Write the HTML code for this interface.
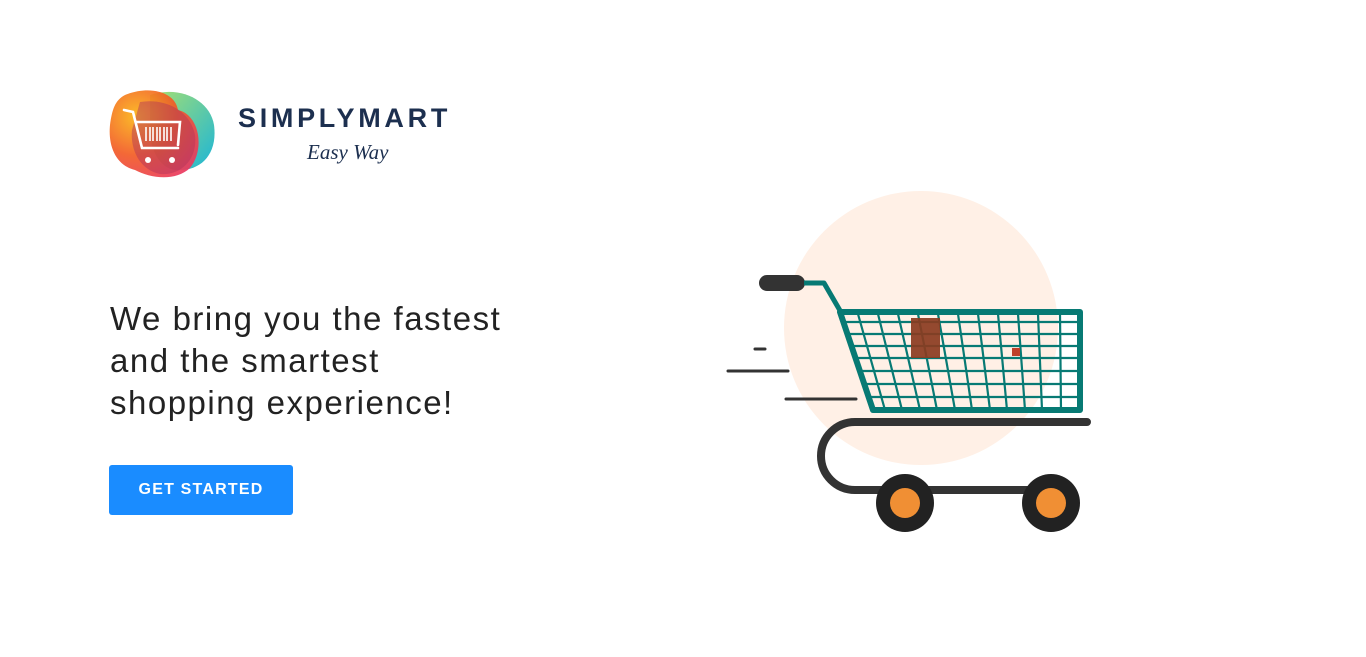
<!DOCTYPE html>
<html><head><meta charset="utf-8"><style>
html,body{margin:0;padding:0;background:#fff;width:1366px;height:657px;overflow:hidden;font-family:"Liberation Sans",sans-serif}
.h{position:absolute;left:110px;top:298px;font-size:33px;line-height:42px;color:#222;letter-spacing:1.5px;margin:0;font-weight:normal}
.btn{position:absolute;left:109px;top:465px;width:184px;height:50px;background:#1a8cff;border-radius:3px;color:#fff;font-size:16px;font-weight:bold;letter-spacing:1.2px;text-align:center;line-height:50px}
.brand{position:absolute;left:238px;top:103px;font-size:27px;font-weight:bold;letter-spacing:3.7px;color:#1c2f4f}
.easy{position:absolute;left:307px;top:140px;font-family:"Liberation Serif",serif;font-style:italic;font-size:21px;color:#1c2f4f}
</style></head><body>
<svg style="position:absolute;left:0;top:0" width="1366" height="657">
<defs>
<radialGradient id="g1" cx="0.3" cy="0.3" r="0.9"><stop offset="0" stop-color="#fbb515"/><stop offset="0.5" stop-color="#f25b25"/><stop offset="1" stop-color="#e8326a"/></radialGradient>
<linearGradient id="g2" x1="0" y1="0" x2="1" y2="1"><stop offset="0" stop-color="#a8e070"/><stop offset="1" stop-color="#1bb5d8"/></linearGradient>
</defs>
<path d="M150 95 C180 85 210 100 214 125 C218 155 200 172 175 170 C160 168 150 150 150 130Z" fill="url(#g2)"/>
<path d="M125 95 C150 85 175 92 178 110 C200 115 205 150 190 168 C175 182 150 178 135 170 C115 165 108 145 110 125 C112 110 115 100 125 95Z" fill="url(#g1)" opacity="0.92"/>
<path d="M140 102 C165 98 190 110 195 135 C198 160 180 176 160 174 C140 170 130 150 132 130Z" fill="#b0305a" opacity="0.45"/>
<g stroke="#fff" stroke-width="2.6" fill="none" stroke-linecap="round"><path d="M124 110 L133 112 L142 148 L178 148"/><path d="M136 122 L180 122 L178 145"/></g>
<g stroke="#fff" stroke-width="1.6"><path d="M146 127v14M150 127v14M153 127v14M157 127v14M160 127v14M164 127v14M167 127v14M171 127v14"/></g>
<circle cx="148" cy="160" r="3" fill="#fff"/><circle cx="172" cy="160" r="3" fill="#fff"/>

<circle cx="921" cy="328" r="137" fill="#fff0e6"/>
<g stroke="#333" stroke-width="3" stroke-linecap="round"><path d="M755 349h10M728 371h60M786 399h70"/></g>
<path d="M1087 422 H855 A34 34 0 0 0 855 490 H1045" fill="none" stroke="#333" stroke-width="8" stroke-linecap="round"/>
<rect x="759" y="275" width="46" height="16" rx="8" fill="#333"/>
<path d="M804 283 H824 L842 314" fill="none" stroke="#077a74" stroke-width="5" stroke-linejoin="round"/>
<g stroke="#077a74" stroke-width="2.2">
<path d="M843 322H1078M847 334H1078M852 346H1078M857 358H1078M862 371H1078M866 384H1078M870 397H1078"/>
<path d="M858 314L885 410M878 314L902 410M898 314L920 410M918 314L937 410M938 314L955 410M958 314L972 410M978 314L990 410M998 314L1007 410M1018 314L1025 410M1038 314L1042 410M1060 314L1061 410"/>
</g>
<rect x="911" y="318" width="29" height="40" fill="#8b3b1f" opacity="0.92"/>
<rect x="1012" y="348" width="8" height="8" fill="#c0402a"/>
<path d="M840 312 H1080 V410 H873 Z" fill="none" stroke="#077a74" stroke-width="6" stroke-linejoin="round"/>
<circle cx="905" cy="503" r="29" fill="#222"/><circle cx="905" cy="503" r="15" fill="#f08f34"/>
<circle cx="1051" cy="503" r="29" fill="#222"/><circle cx="1051" cy="503" r="15" fill="#f08f34"/>
</svg>
<div class="brand">SIMPLYMART</div>
<div class="easy">Easy Way</div>
<h1 class="h">We bring you the fastest<br>and the smartest<br>shopping experience!</h1>
<div class="btn">GET STARTED</div>
</body></html>
